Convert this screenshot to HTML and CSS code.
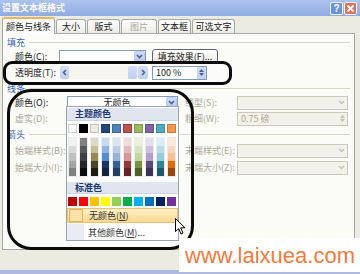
FILE: index.html
```html
<!DOCTYPE html>
<html lang="zh-CN">
<head>
<meta charset="utf-8">
<title>设置文本框格式</title>
<link rel="stylesheet" href="styles.css">
</head>
<body>
<div class="win">
  <div class="titlebar">
    <span class="title">设置文本框格式</span>
    <div class="tbtns">
      <span class="tb help">?</span>
      <span class="tb close"><svg width="9" height="9" viewBox="0 0 9 9"><path d="M1.5 1.5 L7.5 7.5 M7.5 1.5 L1.5 7.5" stroke="#fff" stroke-width="1.8"/></svg></span>
    </div>
  </div>
  <div class="tabs">
    <div class="tab sel t1">颜色与线条</div>
    <div class="tab t2">大小</div>
    <div class="tab t3">版式</div>
    <div class="tab t4 dis">图片</div>
    <div class="tab t5">文本框</div>
    <div class="tab t6">可选文字</div>
  </div>
  <div class="panel">
    <div class="grp">填充</div>
    <div class="row">
      <span class="lab lab-f">颜色(C):</span>
      <div class="combo cw-fill"><span class="val"></span><span class="arr"><svg width="7" height="5" viewBox="0 0 7 5"><path d="M1 1 L3.5 3.5 L6 1" fill="none" stroke="#4d6185" stroke-width="1.6"/></svg></span></div>
      <div class="btn">填充效果(F)...</div>
    </div>
    <div class="row">
      <span class="lab lab-f">透明度(T):</span>
      <div class="slider">
        <span class="sbtn"><svg width="5" height="7" viewBox="0 0 5 7"><path d="M4 1 L1.5 3.5 L4 6" fill="none" stroke="#4d6185" stroke-width="1.5"/></svg></span>
        <span class="track"></span>
        <span class="thumb"></span>
        <span class="sbtn"><svg width="5" height="7" viewBox="0 0 5 7"><path d="M1 1 L3.5 3.5 L1 6" fill="none" stroke="#4d6185" stroke-width="1.5"/></svg></span>
      </div>
      <div class="spin"><span class="sval">100 %</span><span class="sarrs"><svg width="5" height="3" viewBox="0 0 5 3"><path d="M0 3 L2.5 0 L5 3 Z" fill="#4d6185"/></svg><svg width="5" height="3" viewBox="0 0 5 3"><path d="M0 0 L2.5 3 L5 0 Z" fill="#4d6185"/></svg></span></div>
    </div>
    <div class="grp">线条</div>
    <div class="row">
      <span class="lab lab-l">颜色(O):</span>
      <div class="combo cw"><span class="val">无颜色</span><span class="arr"><svg width="7" height="5" viewBox="0 0 7 5"><path d="M1 1 L3.5 3.5 L6 1" fill="none" stroke="#4d6185" stroke-width="1.6"/></svg></span></div>
      <span class="lab lab-r dis">线型(S):</span>
      <div class="combo cw off"><span class="val"></span><span class="arr"><svg width="7" height="5" viewBox="0 0 7 5"><path d="M1 1 L3.5 3.5 L6 1" fill="none" stroke="#c2c0b4" stroke-width="1.4"/></svg></span></div>
    </div>
    <div class="row">
      <span class="lab lab-l dis">虚实(D):</span>
      <div class="combo cw off"><span class="val"></span><span class="arr"></span></div>
      <span class="lab lab-r dis">粗细(W):</span>
      <div class="spin sw off"><span class="sval">0.75 磅</span><span class="sarrs"><svg width="5" height="3" viewBox="0 0 5 3"><path d="M0 3 L2.5 0 L5 3 Z" fill="#c2c0b4"/></svg><svg width="5" height="3" viewBox="0 0 5 3"><path d="M0 0 L2.5 3 L5 0 Z" fill="#c2c0b4"/></svg></span></div>
    </div>
    <div class="grp">箭头</div>
    <div class="row r-arrow">
      <span class="lab lab-l dis">始端样式(B):</span>
      <div class="combo cw off"><span class="val"></span><span class="arr"></span></div>
      <span class="lab lab-r dis">末端样式(E):</span>
      <div class="combo cw off"><span class="val"></span><span class="arr"><svg width="7" height="5" viewBox="0 0 7 5"><path d="M1 1 L3.5 3.5 L6 1" fill="none" stroke="#c2c0b4" stroke-width="1.4"/></svg></span></div>
    </div>
    <div class="row r-arrow2">
      <span class="lab lab-l dis">始端大小(I):</span>
      <div class="combo cw off"><span class="val"></span><span class="arr"></span></div>
      <span class="lab lab-r dis">末端大小(Z):</span>
      <div class="combo cw off"><span class="val"></span><span class="arr"><svg width="7" height="5" viewBox="0 0 7 5"><path d="M1 1 L3.5 3.5 L6 1" fill="none" stroke="#c2c0b4" stroke-width="1.4"/></svg></span></div>
    </div>
  </div>
  <div class="foot"></div>

  <div class="popup">
    <div class="ph">主题颜色</div>
    <div class="swrow base">
      <span style="background:#ffffff"></span><span style="background:#000000"></span><span style="background:#eeece1"></span><span style="background:#1f497d"></span><span style="background:#4f81bd"></span><span style="background:#c0504d"></span><span style="background:#9bbb59"></span><span style="background:#8064a2"></span><span style="background:#4bacc6"></span><span style="background:#f79646"></span>
    </div>
    <div class="shades">
      <div class="col"><span style="background:#f2f2f2"></span><span style="background:#d9d9d9"></span><span style="background:#bfbfbf"></span><span style="background:#a6a6a6"></span><span style="background:#808080"></span></div>
      <div class="col"><span style="background:#7f7f7f"></span><span style="background:#595959"></span><span style="background:#404040"></span><span style="background:#262626"></span><span style="background:#0d0d0d"></span></div>
      <div class="col"><span style="background:#ddd9c3"></span><span style="background:#c4bd97"></span><span style="background:#948a54"></span><span style="background:#4a452a"></span><span style="background:#1e1c11"></span></div>
      <div class="col"><span style="background:#c6d9f0"></span><span style="background:#8db3e2"></span><span style="background:#548dd4"></span><span style="background:#17365d"></span><span style="background:#0f243e"></span></div>
      <div class="col"><span style="background:#dbe5f1"></span><span style="background:#b8cce4"></span><span style="background:#95b3d7"></span><span style="background:#366092"></span><span style="background:#244061"></span></div>
      <div class="col"><span style="background:#f2dcdb"></span><span style="background:#e5b9b7"></span><span style="background:#d99694"></span><span style="background:#953734"></span><span style="background:#632423"></span></div>
      <div class="col"><span style="background:#ebf1dd"></span><span style="background:#d7e3bc"></span><span style="background:#c3d69b"></span><span style="background:#76923c"></span><span style="background:#4f6128"></span></div>
      <div class="col"><span style="background:#e5e0ec"></span><span style="background:#ccc1d9"></span><span style="background:#b2a2c7"></span><span style="background:#5f497a"></span><span style="background:#3f3151"></span></div>
      <div class="col"><span style="background:#dbeef3"></span><span style="background:#b7dde8"></span><span style="background:#92cddc"></span><span style="background:#31859b"></span><span style="background:#205867"></span></div>
      <div class="col"><span style="background:#fdeada"></span><span style="background:#fbd5b5"></span><span style="background:#fac08f"></span><span style="background:#e36c09"></span><span style="background:#974806"></span></div>
    </div>
    <div class="ph ph2">标准色</div>
    <div class="swrow std">
      <span style="background:#c00000"></span><span style="background:#ff0000"></span><span style="background:#ffc000"></span><span style="background:#ffff00"></span><span style="background:#92d050"></span><span style="background:#00b050"></span><span style="background:#00b0f0"></span><span style="background:#0070c0"></span><span style="background:#002060"></span><span style="background:#7030a0"></span>
    </div>
    <div class="mi hot"><span class="mi-ic box"></span><span class="mi-t">无颜色(<u>N</u>)</span></div>
    <div class="mi more"><span class="mi-ic"></span><span class="mi-t">其他颜色(<u>M</u>)...</span></div>
  </div>

  <div class="anno anno1"></div>
  <div class="anno anno2"></div>

  <svg class="cursor" width="11" height="17" viewBox="0 0 11 17"><path d="M0.5 0.5 L0.5 13.5 L3.6 10.6 L6 16 L8 15.1 L5.7 9.8 L10 9.8 Z" fill="#fff" stroke="#000" stroke-width="1" stroke-linejoin="round"/></svg>

  <div class="wm">www.laixuea.com</div>
</div>
</body>
</html>
```

FILE: styles.css
```css
* { box-sizing: border-box; margin: 0; padding: 0; }
html, body { width: 360px; height: 274px; overflow: hidden; }
body {
  font-family: "Noto Sans CJK SC", "Noto Sans", sans-serif;
  font-size: 9px;
  color: #222;
  background: #ecebe1;
}
.win {
  position: relative;
  width: 360px;
  height: 274px;
  background: #ecebe1;
  display: flex;
  flex-direction: column;
}

/* title bar */
.titlebar {
  height: 16px;
  background: linear-gradient(#adc3ee, #8fabe2);
  display: flex;
  align-items: center;
  justify-content: space-between;
  padding: 0 3px 0 2px;
}
.title { color: #fff; font-weight: bold; font-size: 9px; line-height: 16px; }
.tbtns { display: flex; gap: 1px; }
.tb {
  width: 13px; height: 13px;
  border: 1px solid #f4f6fc;
  border-radius: 2px;
  color: #fff;
  font: bold 10px/11px "Liberation Sans", sans-serif;
  display: flex; align-items: center; justify-content: center;
}
.help { background: #6a93df; }
.close { background: #df7258; }

/* tabs */
.tabs {
  display: flex;
  height: 16px;
  margin-top: 1px;
  padding-left: 2px;
  align-items: flex-start;
}
.tab {
  height: 14px;
  margin-top: 2px;
  margin-right: 1px;
  border: 1px solid #a3a9a9;
  border-bottom: none;
  border-radius: 3px 3px 0 0;
  background: linear-gradient(#ffffff, #ecebe5);
  display: flex; align-items: center; justify-content: center;
  font-size: 9px;
  white-space: nowrap;
}
.tab.sel {
  height: 17px;
  margin-top: 0;
  background: #fcfcfa;
  position: relative;
  z-index: 1;
  border-top: 2px solid #efb15a;
  padding-bottom: 1px;
}
.tab.dis { color: #aca899; }
.t1 { width: 53px; }
.t2 { width: 30px; }
.t3 { width: 33px; }
.t4 { width: 36px; }
.t5 { width: 33px; }
.t6 { width: 43px; }

/* panel */
.panel {
  margin-left: 2px;
  width: 353px;
  height: 217px;
  border: 1px solid #a3a9a9;
  background: #fbfbf8;
  display: flex;
  flex-direction: column;
}
.grp {
  display: flex;
  align-items: center;
  height: 12px;
  margin-top: 2px;
  padding-left: 4px;
  color: #3462b0;
  white-space: nowrap;
}
.grp::after {
  content: "";
  flex: 1;
  height: 1px;
  background: #d8d6ca;
  margin: 0 4px 0 4px;
}
.row {
  display: flex;
  align-items: center;
  height: 15px;
  margin-top: 1px;
}
.r-arrow { margin-top: 3px; }
.r-arrow2 { margin-top: 2px; }
.lab { white-space: nowrap; }
.lab.dis { color: #aca899; }
.lab-f { width: 44px; margin-left: 12px; }
.lab-l { width: 52px; margin-left: 12px; }
.lab-r { width: 52px; margin-left: 7px; }

.combo {
  height: 14px;
  border: 1px solid #7f9db9;
  background: #fff;
  display: flex;
  align-items: stretch;
}
.combo .val { flex: 1; text-align: center; line-height: 12px; }
.cw-fill { width: 87px; }
.cw { width: 111px; }
.arr {
  width: 11px;
  margin: 0;
  background: linear-gradient(#cddcfb, #b3c7f2);
  border: 1px solid #bccbef;
  border-radius: 2px;
  display: flex; align-items: center; justify-content: center;
}
.combo.off { border-color: #cbc9bc; background: #f3f2ea; }
.combo.off .arr { background: transparent; border-color: transparent; }

.btn {
  width: 66px;
  height: 15px;
  margin-left: 6px;
  border: 1px solid #5d6677;
  border-radius: 3px;
  background: linear-gradient(#ffffff, #e7e5dc);
  display: flex; align-items: center; justify-content: center;
  white-space: nowrap;
}

.slider {
  width: 88px;
  height: 13px;
  margin-left: 1px;
  display: flex;
  background: #f5f4ef;
}
.sbtn {
  width: 9px;
  background: linear-gradient(#d3dffa, #c0d0f3);
  border-radius: 2px;
  display: flex; align-items: center; justify-content: center;
}
.sbtn:last-child { width: 10px; }
.track { flex: 1; }
.thumb {
  width: 9px;
  margin-right: 1px;
  background: linear-gradient(#d3dffa, #c0d0f3);
  border-radius: 2px;
}

.spin {
  width: 55px;
  height: 14px;
  margin-left: 4px;
  border: 1px solid #7f9db9;
  background: #fff;
  display: flex;
  align-items: stretch;
}
.sval { flex: 1; padding-left: 3px; line-height: 12px; white-space: nowrap; }
.sarrs {
  width: 9px;
  display: flex; flex-direction: column; align-items: center; justify-content: center; gap: 1px;
  background: linear-gradient(#d3dffa, #c0d0f3);
}
.spin.sw { width: 111px; margin-left: 0; }
.spin.off { border-color: #cbc9bc; background: #f3f2ea; color: #aca899; }
.spin.off .sarrs { background: transparent; }

.foot {
  margin-top: auto;
  height: 4px;
  background: #b0b8df;
  margin-bottom: 0;
}

/* dropdown */
.popup {
  position: absolute;
  left: 66px;
  top: 106px;
  width: 113px;
  height: 135px;
  background: #fff;
  border: 1px solid #9aa4b2;
  display: flex;
  flex-direction: column;
  z-index: 5;
}
.ph {
  height: 13px;
  margin-top: 1px;
  background: #dfe6ee;
  border-bottom: 1px solid #cad5e1;
  color: #1d3b72;
  font-weight: bold;
  padding-left: 8px;
  line-height: 12px;
}
.ph2 { height: 12px; margin-top: 5px; line-height: 11px; }
.swrow {
  display: grid;
  grid-template-columns: repeat(10, 9px);
  column-gap: 2px;
  padding-left: 1px;
  height: 9px;
  margin-top: 3px;
}
.swrow span { display: block; height: 9px; }
.swrow.base span { border: 1px solid rgba(0,0,0,0.18); }
.shades {
  display: grid;
  grid-template-columns: repeat(10, 9px);
  column-gap: 2px;
  padding-left: 1px;
  margin-top: 4px;
  height: 40px;
}
.col { display: flex; flex-direction: column; border: 1px solid rgba(0,0,0,0.08); }
.col span { flex: 1; }
.mi {
  display: flex;
  align-items: center;
  height: 16px;
  margin-top: 1px;
  white-space: nowrap;
}
.mi.hot {
  height: 15px;
  margin-top: 2px;
  background: linear-gradient(#fdf1c8, #f9d98f);
  border: 1px solid #e8c06e;
}
.mi-ic {
  width: 17px;
  align-self: stretch;
  background: #e8ebf0;
}
.mi-ic.box {
  width: 14px;
  height: 13px;
  align-self: center;
  margin-left: 1px;
  margin-right: 2px;
  background: #fbe1a8;
  border: 1px solid #e3b35d;
}
.mi-t { padding-left: 4px; color: #333; }
.mi u { text-decoration: underline; }

/* annotations */
.anno {
  position: absolute;
  border: 3px solid #0b0b0b;
  z-index: 6;
}
.anno1 { left: 3px; top: 61px; width: 229px; height: 24px; border-radius: 9px; }
.anno2 { left: 7px; top: 89px; width: 187px; height: 161px; border-radius: 24px; }

.cursor { position: absolute; left: 175px; top: 218px; z-index: 7; }

.wm {
  position: absolute;
  left: 179px;
  top: 238px;
  width: 181px;
  height: 34px;
  padding: 2px 0 0 6px;
  background: #fff;
  color: #f27a3b;
  font: 22px/32px "Liberation Sans", Arial, sans-serif;
  white-space: nowrap;
  z-index: 8;
}
```
